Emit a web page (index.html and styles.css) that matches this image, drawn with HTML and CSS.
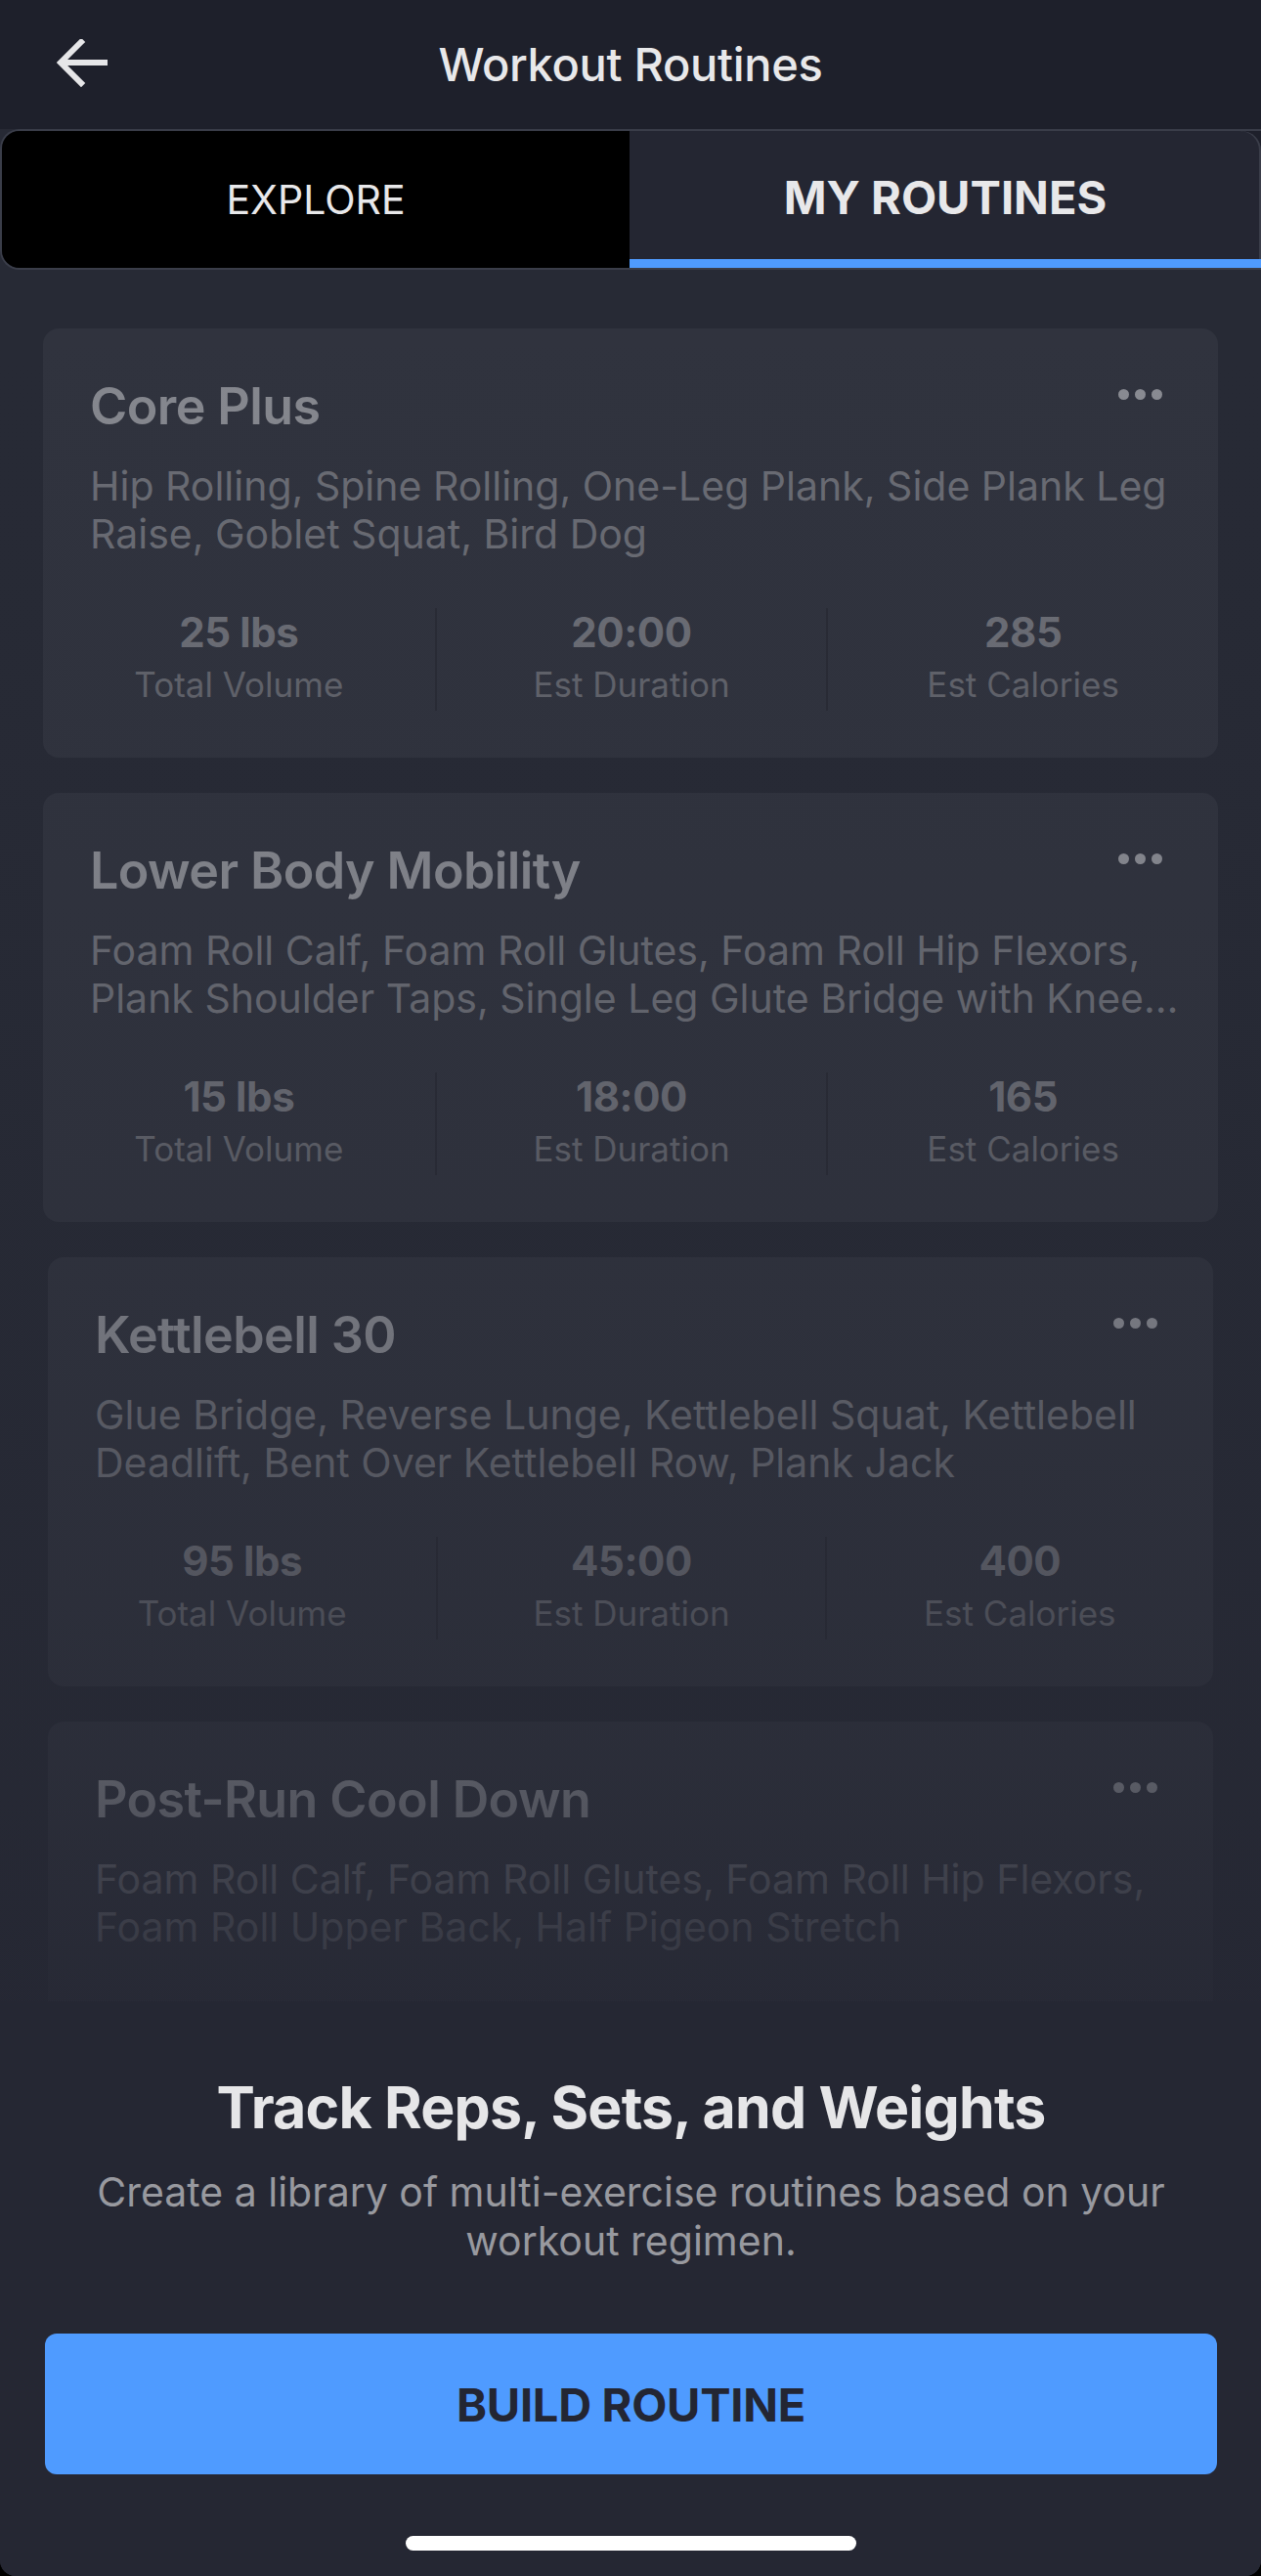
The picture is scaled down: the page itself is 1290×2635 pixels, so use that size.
FILE: index.html
```html
<!DOCTYPE html>
<html lang="en">
<head>
  <meta charset="UTF-8">
  <title>Workout Routines</title>
  <link rel="stylesheet" href="styles.css">
</head>
<body>
  <div class="screen">
    <header class="topbar">
      <button class="back-btn" aria-label="Back">
        <svg width="54" height="52" viewBox="0 0 54 52">
          <path d="M50 24H8M26 3L5 24l21 21" fill="none" stroke="#e6e6e8" stroke-width="6" stroke-linecap="square"/>
        </svg>
      </button>
      <h1 class="topbar-title">Workout Routines</h1>
    </header>

    <nav class="tabs">
      <div class="tab">EXPLORE</div>
      <div class="tab active">MY ROUTINES</div>
    </nav>

    <main class="routine-list">
      <div class="routine-card">
        <div class="card-head">
          <h2 class="card-title">Core Plus</h2>
          <span class="more-dots"><i></i><i></i><i></i></span>
        </div>
        <p class="card-desc">Hip Rolling, Spine Rolling, One-Leg Plank, Side Plank Leg Raise, Goblet Squat, Bird Dog</p>
        <div class="stats">
          <div class="stat"><b>25 lbs</b><span>Total Volume</span></div>
          <div class="stat"><b>20:00</b><span>Est Duration</span></div>
          <div class="stat"><b>285</b><span>Est Calories</span></div>
        </div>
      </div>

      <div class="routine-card">
        <div class="card-head">
          <h2 class="card-title">Lower Body Mobility</h2>
          <span class="more-dots"><i></i><i></i><i></i></span>
        </div>
        <p class="card-desc">Foam Roll Calf, Foam Roll Glutes, Foam Roll Hip Flexors, Plank Shoulder Taps, Single Leg Glute Bridge with Knee Drive, Dead Bug</p>
        <div class="stats">
          <div class="stat"><b>15 lbs</b><span>Total Volume</span></div>
          <div class="stat"><b>18:00</b><span>Est Duration</span></div>
          <div class="stat"><b>165</b><span>Est Calories</span></div>
        </div>
      </div>

      <div class="routine-card narrow">
        <div class="card-head">
          <h2 class="card-title">Kettlebell 30</h2>
          <span class="more-dots"><i></i><i></i><i></i></span>
        </div>
        <p class="card-desc">Glue Bridge, Reverse Lunge, Kettlebell Squat, Kettlebell Deadlift, Bent Over Kettlebell Row, Plank Jack</p>
        <div class="stats">
          <div class="stat"><b>95 lbs</b><span>Total Volume</span></div>
          <div class="stat"><b>45:00</b><span>Est Duration</span></div>
          <div class="stat"><b>400</b><span>Est Calories</span></div>
        </div>
      </div>

      <div class="routine-card narrow tail">
        <div class="card-head">
          <h2 class="card-title">Post-Run Cool Down</h2>
          <span class="more-dots"><i></i><i></i><i></i></span>
        </div>
        <p class="card-desc">Foam Roll Calf, Foam Roll Glutes, Foam Roll Hip Flexors, Foam Roll Upper Back, Half Pigeon Stretch</p>
      </div>
      <div class="dim"></div>
    </main>

    <section class="sheet">
      <h3 class="sheet-title">Track Reps, Sets, and Weights</h3>
      <p class="sheet-text">Create a library of multi-exercise routines based on your workout regimen.</p>
      <button class="build-btn">BUILD ROUTINE</button>
      <div class="home-bar"></div>
    </section>
  </div>
</body>
</html>
```

FILE: styles.css
```css
body {
  margin: 0;
  background: #000;
  font-family: Inter, 'Noto Sans', sans-serif;
}
.screen {
  width: 1290px;
  height: 2635px;
  display: flex;
  flex-direction: column;
  background: #272a35;
  border-radius: 0 0 16px 16px;
  overflow: hidden;
}

/* top bar */
.topbar {
  height: 132px;
  flex-shrink: 0;
  background: #1e202b;
  display: flex;
  align-items: center;
  justify-content: center;
  position: relative;
}
.back-btn {
  position: absolute;
  left: 57px;
  top: 40px;
  padding: 0;
  border: none;
  background: none;
  line-height: 0;
}
.topbar-title {
  margin: 0 0 2px;
  color: #e8e8ea;
  font-size: 47px;
  font-weight: 500;
  letter-spacing: -0.3px;
}

/* tabs */
.tabs {
  height: 144px;
  flex-shrink: 0;
  box-sizing: border-box;
  display: grid;
  grid-template-columns: 642px 1fr;
  background: #1e202b;
  border: 2px solid #3a3d49;
  border-right: none;
  border-radius: 20px 0 0 20px;
  overflow: hidden;
}
.tab {
  display: flex;
  align-items: center;
  justify-content: center;
  color: #e8e8ea;
  font-size: 41px;
  background: #000;
}
.tab.active {
  background: #242632;
  font-size: 47px;
  font-weight: 700;
  border-bottom: 9px solid #4f9bff;
  border-top-right-radius: 20px;
  box-shadow: inset -2px 0 0 #3a3d49;
  padding-top: 4px;
}

/* list */
.routine-list {
  flex: 1;
  min-height: 0;
  overflow: hidden;
  position: relative;
  padding: 60px 44px 0;
  display: flex;
  flex-direction: column;
  gap: 36px;
}
.routine-card {
  flex-shrink: 0;
  background: #30333e;
  border-radius: 16px;
  padding: 49px 0 48px;
}
.routine-card.narrow {
  margin: 0 5px;
}
.routine-card.tail {
  padding-bottom: 140px;
}
.card-head {
  display: flex;
  justify-content: space-between;
  align-items: flex-start;
  padding: 0 57px 0 48px;
}
.card-title {
  margin: 0;
  font-size: 52px;
  line-height: 62px;
  font-weight: 600;
  letter-spacing: -0.6px;
  color: #86888f;
}
.more-dots {
  display: flex;
  gap: 6px;
  margin-top: 13px;
}
.more-dots i {
  width: 11px;
  height: 11px;
  border-radius: 50%;
  background: #8a8c93;
}
.card-desc {
  margin: 26px 0 0;
  padding: 0 40px 0 48px;
  font-size: 41px;
  line-height: 49px;
  letter-spacing: 0;
  color: #6a6c74;
  display: -webkit-box;
  -webkit-line-clamp: 2;
  -webkit-box-orient: vertical;
  overflow: hidden;
}
.stats {
  margin-top: 51px;
  display: grid;
  grid-template-columns: repeat(3, 1fr);
}
.stat {
  height: 105px;
  display: flex;
  flex-direction: column;
  align-items: center;
  border-left: 2px solid #292b35;
}
.stat:first-child {
  border-left: none;
}
.stat b {
  font-size: 42px;
  line-height: 50px;
  font-weight: 700;
  letter-spacing: -0.4px;
  color: #6c6e76;
}
.stat span {
  margin-top: 6px;
  font-size: 35px;
  line-height: 44px;
  color: #62646c;
}
.dim {
  position: absolute;
  inset: 0;
  background: linear-gradient(180deg,
    rgba(37, 39, 51, 0) 0%,
    rgba(37, 39, 51, 0.07) 32%,
    rgba(37, 39, 51, 0.2) 60%,
    rgba(37, 39, 51, 0.45) 86%,
    rgba(37, 39, 51, 0.8) 100%);
}

/* bottom sheet */
.sheet {
  height: 588px;
  flex-shrink: 0;
  box-sizing: border-box;
  background: #252733;
  padding: 74px 45px 0 46px;
  display: flex;
  flex-direction: column;
  align-items: center;
  text-align: center;
}
.sheet-title {
  margin: 0;
  font-size: 59px;
  line-height: 70px;
  font-weight: 700;
  letter-spacing: -0.8px;
  color: #e6e6e8;
}
.sheet-text {
  margin: 26px 0 0;
  max-width: 1110px;
  font-size: 41px;
  line-height: 50px;
  letter-spacing: 0;
  color: #98999f;
}
.build-btn {
  margin-top: 70px;
  width: 100%;
  height: 144px;
  border: none;
  border-radius: 12px;
  background: #4f9bff;
  color: #232633;
  font-family: inherit;
  font-size: 47px;
  font-weight: 700;
  letter-spacing: -0.3px;
}
.home-bar {
  margin-top: 63px;
  width: 461px;
  height: 15px;
  border-radius: 8px;
  background: #fff;
}
```
